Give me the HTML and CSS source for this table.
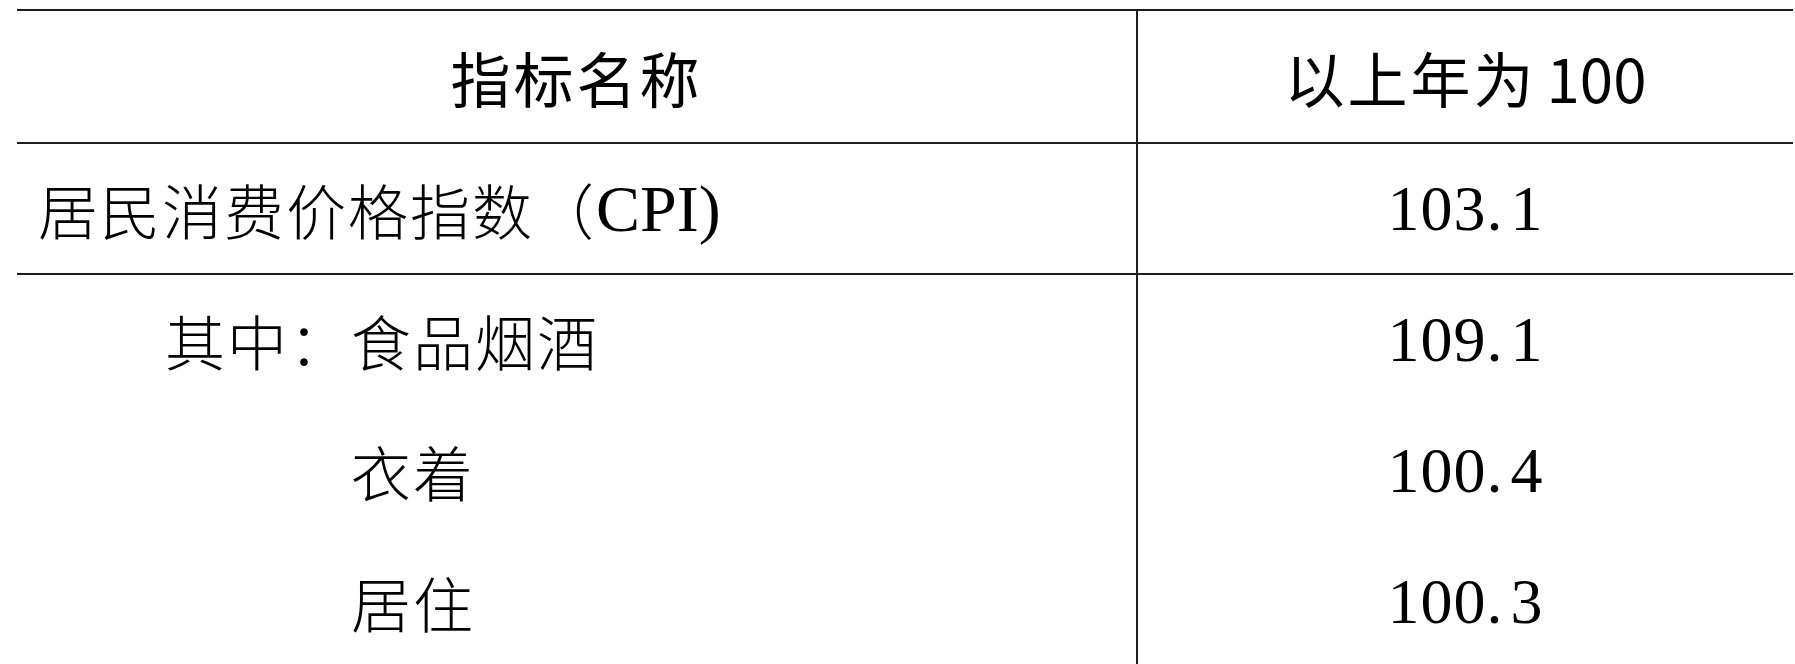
FILE: index.html
```html
<!DOCTYPE html>
<html lang="zh-CN">
<head>
<meta charset="utf-8">
<title>居民消费价格指数</title>
<link rel="stylesheet" href="styles.css">
</head>
<body>
<div class="sheet">
  <div class="row ruled row-head">
    <div class="cell name head">指标名称</div>
    <div class="cell value head">以上年为<span class="hnum">100</span></div>
  </div>
  <div class="row ruled row-1">
    <div class="cell name body-text indent-0">居民消费价格指数（<span class="lat">CPI)</span></div>
    <div class="cell value num">103<span class="pt">.</span>1</div>
  </div>
  <div class="row row-2">
    <div class="cell name body-text indent-2">其中：食品烟酒</div>
    <div class="cell value num">109<span class="pt">.</span>1</div>
  </div>
  <div class="row row-3">
    <div class="cell name body-text indent-5">衣着</div>
    <div class="cell value num">100<span class="pt">.</span>4</div>
  </div>
  <div class="row row-4">
    <div class="cell name body-text indent-5">居住</div>
    <div class="cell value num">100<span class="pt">.</span>3</div>
  </div>
</div>
</body>
</html>
```
FILE: styles.css
```css
html, body {
  margin: 0;
  padding: 0;
  background: #ffffff;
  overflow: hidden;
}

.sheet {
  margin: 9px 0 0 17px;
  width: 1776px;
  border-top: 2px solid #1e1e1e;
  color: #000000;
}

.row {
  display: grid;
  grid-template-columns: 1119px 1fr;
}

.row.ruled {
  border-bottom: 2px solid #1e1e1e;
}

.row-head { height: 131px; }
.row-1 { height: 129px; }
.row-2 { height: 130px; }
.row-3 { height: 131px; }
.row-4 { height: 131px; }

.cell {
  display: flex;
  align-items: center;
  white-space: nowrap;
}

.cell.name.head {
  justify-content: center;
}

.cell.value {
  border-left: 2px solid #1e1e1e;
  justify-content: center;
}

.head {
  font-family: "Noto Sans CJK SC", "Noto Sans", sans-serif;
  font-size: 60px;
  font-weight: 400;
  letter-spacing: 3px;
}

.hnum {
  margin-left: 10px;
  letter-spacing: 0;
}

.body-text {
  font-family: "Noto Sans CJK SC", sans-serif;
  font-size: 60px;
  font-weight: 300;
  letter-spacing: 2px;
  line-height: 1;
}

.lat {
  font-family: "Liberation Serif", serif;
  font-size: 66px;
  font-weight: 400;
  letter-spacing: 0;
}

.indent-0 { padding-left: 21px; }
.indent-2 { padding-left: 148px; }
.indent-5 { padding-left: 334px; }

.num {
  font-family: "Liberation Serif", serif;
  font-size: 64px;
  letter-spacing: 1px;
  line-height: 1;
}

.pt {
  letter-spacing: 8px;
}
```
